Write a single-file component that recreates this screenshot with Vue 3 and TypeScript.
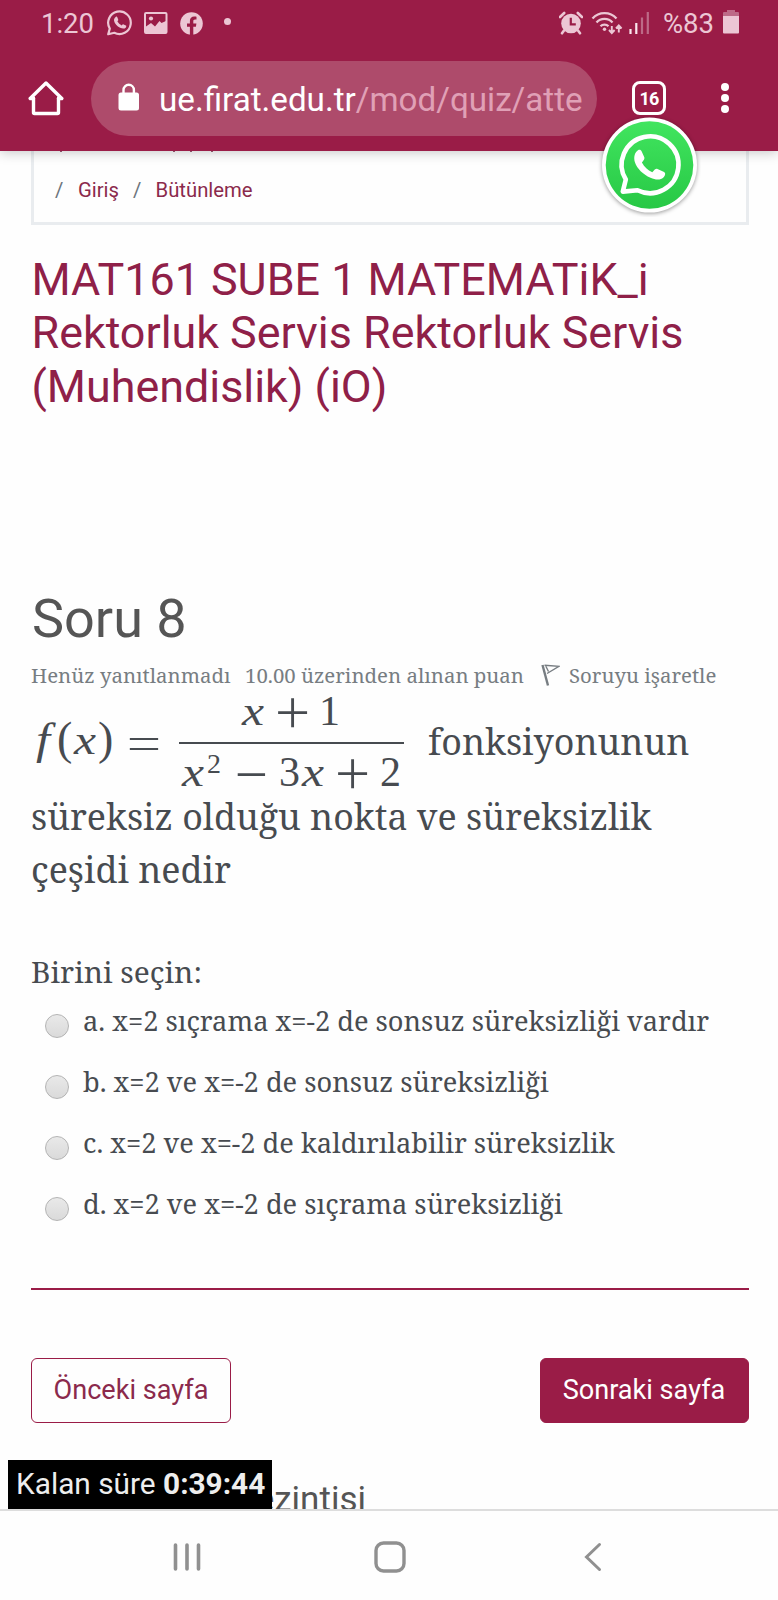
<script setup lang="ts">
interface Option {
  key: string
  text: string
}

const titleLines: string[] = [
  'MAT161 SUBE 1 MATEMATiK_i',
  'Rektorluk Servis Rektorluk Servis',
  '(Muhendislik) (iO)',
]

const options: Option[] = [
  { key: 'a', text: 'x=2 sıçrama x=-2 de sonsuz süreksizliği vardır' },
  { key: 'b', text: 'x=2 ve x=-2 de sonsuz süreksizliği' },
  { key: 'c', text: 'x=2 ve x=-2 de kaldırılabilir süreksizlik' },
  { key: 'd', text: 'x=2 ve x=-2 de sıçrama süreksizliği' },
]
</script>

<template>
  <div class="screen">
    <header class="top">
      <div class="status">
        <span class="clock">1:20</span>
        <svg class="st-wa" width="28" height="28" viewBox="0 0 28 28" fill="none">
          <path d="M2.2 25.2 3.8 19.6A11.3 11.3 0 1 1 8.3 23.8Z" stroke="#ecc6d4" stroke-width="2.2" stroke-linejoin="round" />
          <path d="M9.700 7.900c.7-.5 1.300-.3 1.600.4l.9 2.100c.2.6-.1 1.100-.8 1.900 1 1.900 2.400 3.200 4.300 4.100.8-.9 1.200-1.300 1.900-1l2.300 1.100c.6.4.5 1.200 0 1.900-1.300 1.500-3.200 1.600-5.800.4-3.100-1.500-5.400-4.100-6-6.800-.4-1.900.4-3.200 1.600-4.100Z" fill="#ecc6d4" />
        </svg>
        <svg class="st-img" width="24" height="22" viewBox="0 0 24 22">
          <rect x="1" y="1" width="21.5" height="20" rx="1" fill="none" stroke="#ecc6d4" stroke-width="2" />
          <circle cx="7" cy="6.5" r="2.1" fill="#ecc6d4" />
          <path d="M2 14.500 7 11l4 3.500L15.500 9l2 2L22 9v12H2Z" fill="#ecc6d4" />
        </svg>
        <svg class="st-fb" width="23" height="23" viewBox="0 0 23 23">
          <circle cx="11.5" cy="11.5" r="11.3" fill="#ecc6d4" />
          <path d="M9.900 23v-8.300H7v-3.300h2.900V9c0-3 1.700-4.500 4.300-4.500 1.200 0 2.300.2 2.300.2v2.700h-1.400c-1.400 0-1.800.8-1.800 1.700v2.300h3.100l-.5 3.300h-2.600V23Z" fill="#9a1c47" />
        </svg>
        <span class="st-dot"></span>
        <span class="grow"></span>
        <svg class="st-alarm" width="24" height="24" viewBox="0 0 24 24">
          <circle cx="12" cy="12.5" r="9.8" fill="#ecc6d4" />
          <path d="M1 6 5.200 2M23 6 18.800 2M5 19.500 3 22.300M19 19.500l2 2.800" stroke="#ecc6d4" stroke-width="2.6" stroke-linecap="round" />
          <path d="M11.800 6.800v6.500h5" fill="none" stroke="#9a1c47" stroke-width="2.2" />
        </svg>
        <svg class="st-wifi" width="32" height="24" viewBox="0 0 32 24" fill="none" stroke="#ecc6d4" stroke-width="2.3">
          <path d="M1.500 7.500a16 16 0 0 1 24 0M5.500 11.600a10.600 10.600 0 0 1 16 0M9.500 15.300a5.500 5.500 0 0 1 8 0" />
          <circle cx="13.500" cy="18.200" r="1.700" fill="#ecc6d4" stroke="none" />
          <path d="M20.800 15v6.500M18 19l2.800 3 2.800-3M27.800 21.500V15M25 17.500l2.800-3 2.800 3" stroke-width="1.900" />
        </svg>
        <svg class="st-sig" width="22" height="23" viewBox="0 0 22 23">
          <path d="M1.500 17v5M7.300 11v11" stroke="#fbe6ee" stroke-width="2.2" />
          <path d="M13 5.500V22M18.800 0v22" stroke="#bd6a87" stroke-width="2.2" />
        </svg>
        <span class="pct">%83</span>
        <svg class="st-bat" width="16" height="24" viewBox="0 0 16 24">
          <rect x="4" y="0" width="8" height="4" fill="#bd6a87" />
          <rect y="2" width="16" height="6" rx="1" fill="#bd6a87" />
          <path d="M0 6h16v16.500q0 1-1 1H1q-1 0-1-1Z" fill="#ecc6d4" />
        </svg>
      </div>
      <div class="bar">
        <svg class="home" width="36" height="36" viewBox="0 0 36 36" fill="none" stroke="#fff" stroke-width="3.4" stroke-linejoin="round" stroke-linecap="round">
          <path d="M5.500 18v14.500q0 1 1 1h23q1 0 1-1V18" />
          <path d="M2.200 18.500 18 3l15.800 15.500H30.500M2.200 18.500H5.500" />
        </svg>
        <div class="pill">
          <svg class="lock" width="22" height="28" viewBox="0 0 22 28">
            <rect x=".5" y="9.5" width="20.5" height="18" rx="2.5" fill="#fff" />
            <path d="M5.500 11V7a5.200 5.200 0 0 1 10.400 0v4" fill="none" stroke="#fff" stroke-width="2.4" />
          </svg>
          <span class="url">ue.firat.edu.tr<span class="path">/mod/quiz/atte</span></span>
        </div>
        <div class="tabs">16</div>
        <div class="dots"><i></i><i></i><i></i></div>
      </div>
      <svg class="bubble" width="104" height="104" viewBox="0 0 104 104">
        <defs>
          <linearGradient id="wa" x1="0" y1="0" x2="0" y2="1">
            <stop offset="0" stop-color="#41e55f" />
            <stop offset="1" stop-color="#27c845" />
          </linearGradient>
        </defs>
        <circle class="disc" cx="52.500" cy="52" r="47.500" fill="#fff" />
        <circle cx="52.500" cy="52" r="43.800" fill="url(#wa)" />
        <path d="M25.800 78.600 28.800 66.500A28.400 28.400 0 1 1 40.500 77.200Z" fill="none" stroke="#fff" stroke-width="4.6" stroke-linejoin="round" />
        <path d="M41 37.200c1.500-.8 3-.4 3.700 1.200l2.600 5.800c.5 1.400-.3 2.600-2.400 5.200 2.600 4.600 5.600 7.400 10.400 9.800 2.600-3 3.600-4 5.200-3.300l6.600 3.200c1.700 1 1.300 3-.2 4.800-3.400 3.600-8 3.200-13.400.9C46 61.500 40 55.500 38 49.500c-1.600-5-.5-10 3-12.300Z" fill="#fff" />
      </svg>
    </header>

    <main class="page">
      <nav class="crumbs">
        <div class="clipped"><i></i><i></i><i></i><i></i></div>
        <span class="sep">/</span><a>Giriş</a><span class="sep">/</span><a>Bütünleme</a>
      </nav>

      <h1 class="title">
        <span v-for="line in titleLines" :key="line">{{ line }}</span>
      </h1>

      <h2 class="qno">Soru 8</h2>

      <div class="meta">
        <span class="m1">Henüz yanıtlanmadı</span>
        <span class="m2">10.00 üzerinden alınan puan</span>
        <svg class="flag" width="19" height="22" viewBox="0 0 19 22" fill="none" stroke="#777d82">
          <path d="M1.500 1 7 21.500" stroke-width="2.4" />
          <path d="M3.500 1.300 18 2.300 6 9.500M4.500 1.500l3 6" stroke-width="1.4" />
        </svg>
        <span class="m3">Soruyu işaretle</span>
      </div>

      <div class="formula">
        <svg class="math" width="374" height="110" viewBox="0 0 374 110" fill="#474b50">
          <g class="it">
            <text x="5" y="64" font-size="44" textLength="14" lengthAdjust="spacingAndGlyphs">f</text>
            <text x="43" y="64" font-size="43" textLength="22" lengthAdjust="spacingAndGlyphs">x</text>
            <text x="211" y="35" font-size="43" textLength="22" lengthAdjust="spacingAndGlyphs">x</text>
            <text x="151" y="95.500" font-size="43" textLength="22" lengthAdjust="spacingAndGlyphs">x</text>
            <text x="271" y="95.500" font-size="43" textLength="22" lengthAdjust="spacingAndGlyphs">x</text>
          </g>
          <g class="up">
            <text x="26" y="64" font-size="46">(</text>
            <text x="67" y="64" font-size="46">)</text>
            <text x="288" y="35" font-size="42">1</text>
            <text x="176" y="83" font-size="28">2</text>
            <text x="248" y="95.500" font-size="42">3</text>
            <text x="349" y="95.500" font-size="42">2</text>
          </g>
          <g class="op">
            <text x="113" y="67.500" font-size="50" textLength="49" lengthAdjust="spacingAndGlyphs">=</text>
            <text x="261.500" y="42" font-size="67">+</text>
            <text x="220.500" y="102.500" font-size="64">−</text>
            <text x="321.500" y="102.500" font-size="67">+</text>
          </g>
          <rect x="148" y="52" width="225" height="2" />
        </svg>
        <span class="q q1">fonksiyonunun</span>
      </div>
      <div class="q q2">süreksiz olduğu nokta ve süreksizlik</div>
      <div class="q q3">çeşidi nedir</div>

      <div class="prompt">Birini seçin:</div>

      <div v-for="o in options" :key="o.key" class="opt">
        <span class="radio"></span>
        <span class="label">{{ o.key }}. {{ o.text }}</span>
      </div>

      <hr class="rule" />

      <div class="buttons">
        <button class="btn ghost">Önceki sayfa</button>
        <button class="btn solid">Sonraki sayfa</button>
      </div>
      <div class="next">ezintisi</div>
    </main>

    <div class="timer">Kalan süre <b>0:39:44</b></div>

    <footer class="sysnav">
      <svg width="28" height="30" viewBox="0 0 28 30" stroke="#909090" stroke-width="3.6" stroke-linecap="round">
        <path d="M2.500 3v24M14 3v24M25.500 3v24" />
      </svg>
      <svg class="homebtn" width="32" height="32" viewBox="0 0 32 32" fill="none" stroke="#909090" stroke-width="3.4">
        <rect x="2" y="2" width="28" height="28" rx="7.500" />
      </svg>
      <svg width="18" height="30" viewBox="0 0 18 30" fill="none" stroke="#909090" stroke-width="3" stroke-linecap="round">
        <path d="M15.500 2.500 2.500 15l13 12.500" />
      </svg>
    </footer>
  </div>
</template>

<style>
body {
  background: #fff;
}
</style>

<style scoped>
.screen {
  position: relative;
  width: 778px;
  height: 1600px;
  overflow: hidden;
  background: #fefefe;
  font-family: Roboto, "Liberation Sans", sans-serif;
  display: flex;
  flex-direction: column;
}
.top {
  position: relative;
  z-index: 2;
  flex: none;
  height: 151px;
  background: #9a1c47;
  box-shadow: 0 1px 12px rgba(0, 0, 0, 0.24);
}
.status {
  height: 46px;
  display: flex;
  align-items: center;
  padding: 0 39px 0 41px;
  color: #ecc6d4;
  font-size: 27.5px;
}
.clock { width: 65px; }
.pct { margin-left: 12px; }
.st-img { margin-left: 10px; }
.st-fb { margin-left: 12px; }
.st-dot {
  width: 7px;
  height: 7px;
  border-radius: 50%;
  background: #ecc6d4;
  margin: -3px 0 0 21px;
}
.grow { flex: 1; }
.st-alarm { margin-right: -1px; }
.st-wifi { margin-left: 9px; }
.st-sig { margin-left: 6px; }
.st-bat { margin: -2px 0 0 9px; }
.bar {
  height: 76px;
  margin-top: 14px;
  display: flex;
  align-items: center;
}
.home { margin-left: 28px; }
.pill {
  width: 506px;
  height: 75.5px;
  margin: 0.5px 0 0 27px;
  box-sizing: border-box;
  border-radius: 38px;
  background: #ae4b6b;
  display: flex;
  align-items: center;
  padding-left: 27px;
}
.lock { margin-top: -3px; }
.url {
  margin: 2px 0 0 19px;
  color: #fff;
  font-size: 33.2px;
  white-space: nowrap;
}
.path { color: #e0a0b6; }
.tabs {
  width: 34px;
  height: 34px;
  margin-left: 35px;
  box-sizing: border-box;
  border: 3.5px solid #fff;
  border-radius: 8px;
  color: #fff;
  font-size: 18px;
  letter-spacing: -0.8px;
  font-weight: 700;
  display: grid;
  place-items: center;
}
.dots {
  margin-left: 54.5px;
  display: grid;
  gap: 3px;
}
.dots i {
  width: 8px;
  height: 8px;
  border-radius: 50%;
  background: #fff;
}
.bubble {
  position: absolute;
  left: 597px;
  top: 113px;
}
.disc { filter: drop-shadow(0 1px 2px rgba(0, 0, 0, 0.4)); }
.page {
  flex: 1;
  padding: 0 29.5px 0 31px;
}
.crumbs {
  position: relative;
  height: 74px;
  box-sizing: border-box;
  border: solid #e9ecef;
  border-width: 0 3px 3px;
  padding: 27px 0 0 21px;
  display: flex;
  align-items: flex-start;
  font-size: 20.3px;
  line-height: 24px;
  color: #8b2a4c;
}
.sep {
  color: #6c757d;
  width: 23px;
}
.crumbs a + .sep { margin-left: 14px; width: 22.5px; }
.clipped i {
  position: absolute;
  top: 0;
  width: 2px;
  height: 1px;
  background: #9c5c75;
}
.clipped i:nth-child(1) { left: 26px; }
.clipped i:nth-child(2) { left: 139px; }
.clipped i:nth-child(3) { left: 156px; }
.clipped i:nth-child(4) { left: 177px; }
.title {
  margin: 28px 0 0 0.5px;
  font-size: 44.85px;
  line-height: 53.3px;
  font-weight: 400;
  color: #8f2048;
}
.title span {
  display: block;
  white-space: nowrap;
}
.qno {
  margin: 174px 0 0 1px;
  font-size: 54px;
  line-height: 64px;
  font-weight: 400;
  color: #555;
}
.meta, .q, .prompt, .opt {
  font-family: "Noto Serif", "DejaVu Serif Condensed", "DejaVu Serif", serif;
  white-space: nowrap;
}
.meta {
  display: flex;
  height: 32px;
  line-height: 32px;
  margin-top: 8px;
  font-size: 20.4px;
  color: #777d82;
}
.m1 { width: 214px; }
.m2 { width: 296px; }
.flag { margin-top: 5px; }
.m3 { margin-left: 9px; }
.formula {
  height: 93px;
  display: flex;
  align-items: flex-start;
}
.math { flex: none; margin-top: -1px; }
.math .it {
  font-family: "Liberation Serif", serif;
  font-style: italic;
}
.math .up { font-family: "Liberation Serif", serif; }
.math .op {
  font-family: Inter, sans-serif;
  font-weight: 200;
  text-anchor: middle;
}
.q {
  color: #474b50;
  font-size: 35.85px;
  line-height: 53.3px;
}
.q1 { margin: 24px 0 0 23px; }
.q2 { margin-top: 6px; }
.prompt {
  margin-top: 54px;
  font-size: 29.9px;
  line-height: 44px;
  color: #474b50;
}
.opt {
  height: 61px;
  display: flex;
  align-items: center;
  font-size: 27.22px;
  color: #474b50;
}
.label { margin-top: -8px; }
.radio {
  width: 22px;
  height: 22px;
  margin: 2px 14px 0 14px;
  border: 1px solid #b4b4b4;
  border-radius: 50%;
  background: linear-gradient(#e9e9e9, #dadada);
}
.rule {
  height: 1.5px;
  margin: 50px 0 0;
  border: 0;
  background: #9a1c47;
}
.buttons {
  display: flex;
  justify-content: space-between;
  margin-top: 68px;
}
.btn {
  height: 65px;
  box-sizing: border-box;
  padding: 0;
  border: 1.5px solid #9a1c47;
  border-radius: 6px;
  font: 400 27.1px Roboto, sans-serif;
}
.ghost {
  width: 200px;
  background: transparent;
  color: #8b2a4c;
}
.solid {
  width: 209px;
  background: #9a1c47;
  color: #fff;
}
.next {
  margin: 55px 382.5px 0 0;
  text-align: right;
  font-size: 35px;
  line-height: 44px;
  color: #555;
}
.timer {
  position: absolute;
  z-index: 1;
  left: 8px;
  top: 1460px;
  width: 264px;
  height: 49px;
  box-sizing: border-box;
  padding-left: 8px;
  background: #000;
  color: #eee;
  font-size: 29.8px;
  line-height: 47px;
  white-space: nowrap;
}
.sysnav {
  position: absolute;
  z-index: 2;
  left: 0;
  right: 0;
  bottom: 0;
  height: 91px;
  box-sizing: border-box;
  border-top: 2px solid #ddd;
  background: #fefefe;
  display: flex;
  align-items: center;
  padding: 3px 176px 0 173px;
  justify-content: space-between;
}
.homebtn { margin-right: 6px; }
</style>
